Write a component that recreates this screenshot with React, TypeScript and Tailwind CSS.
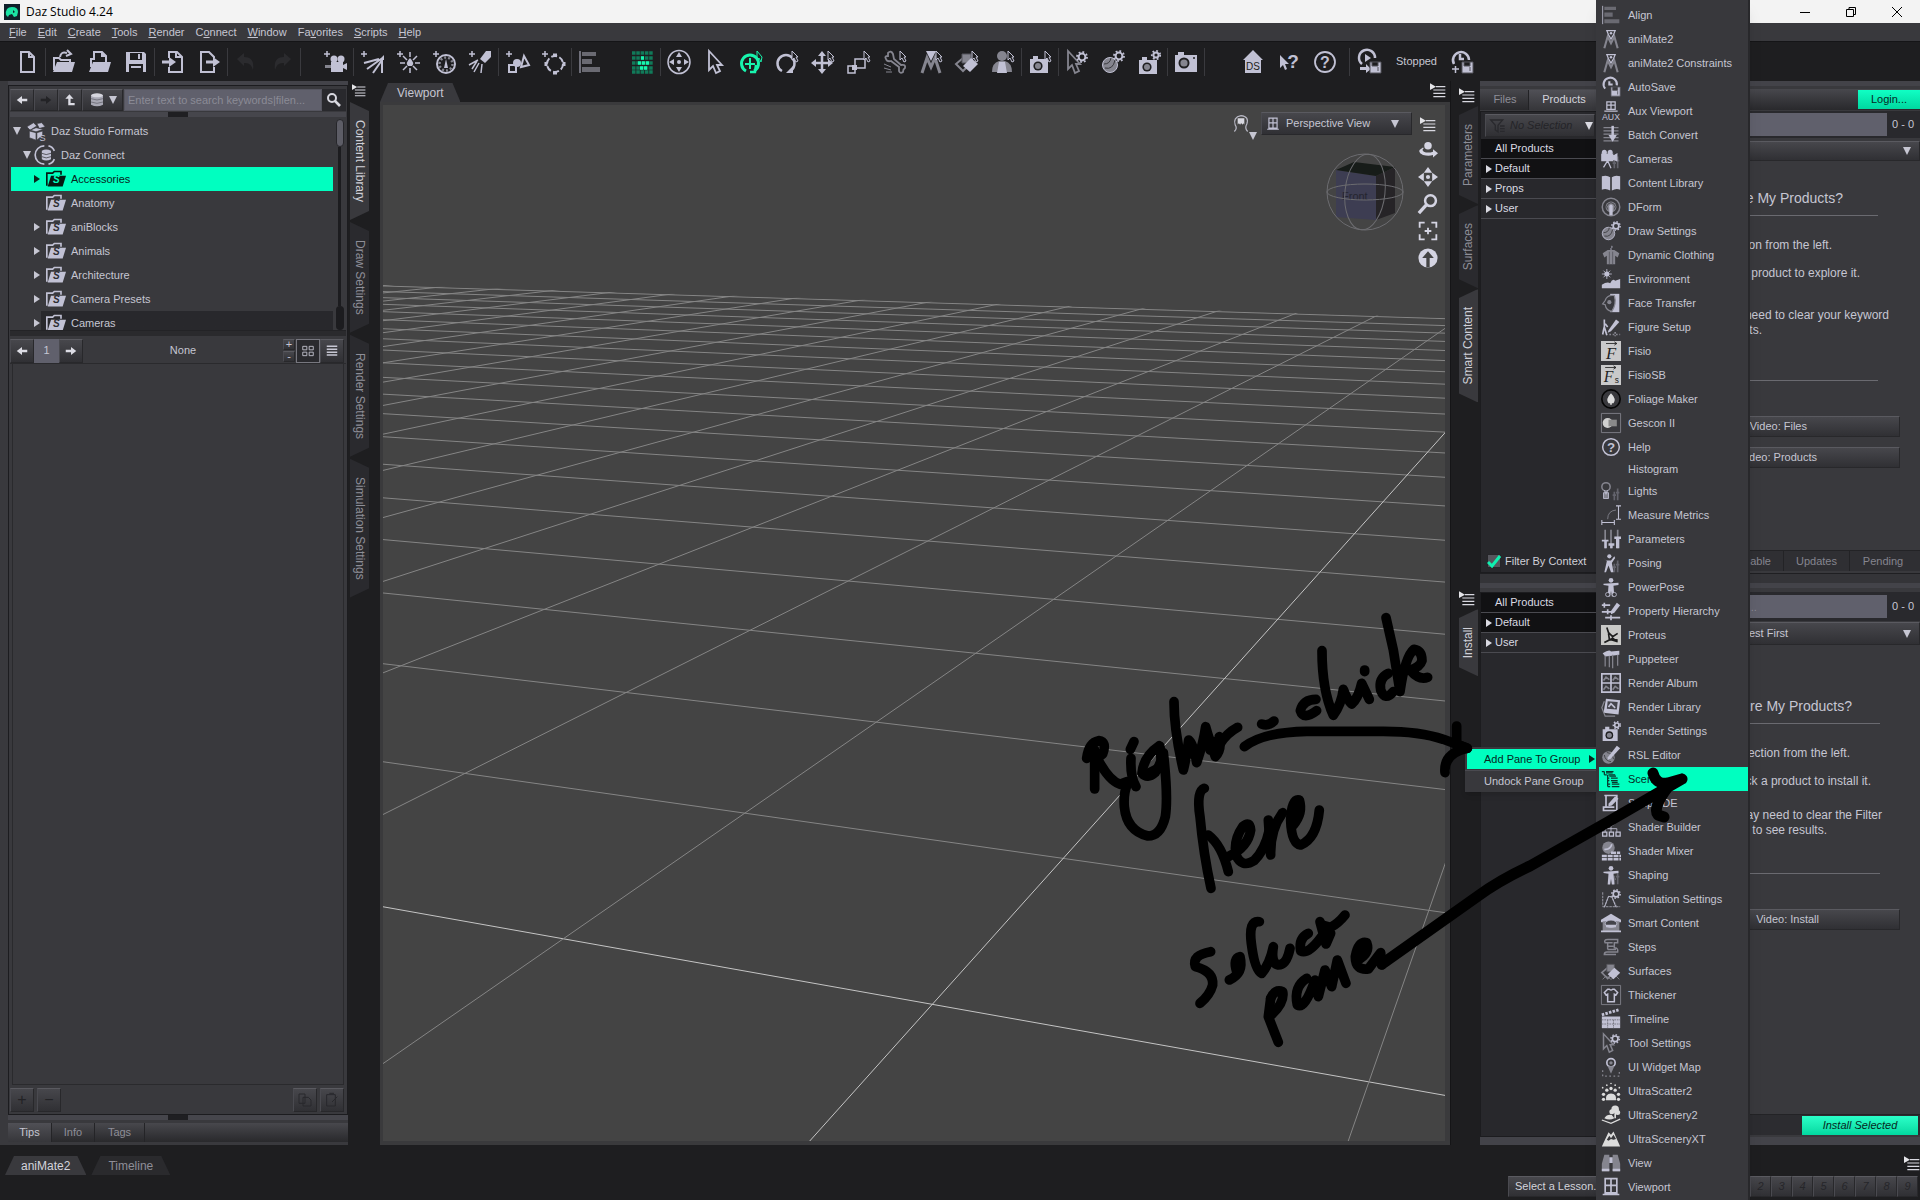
import React from "react";
import type { ReactNode } from "react";

const L = "#c1c1d4";
const D = "#85858f";

type IconProps = { name: string; className?: string };

const pointer = <path d="M17 1v9l2-2 2 4 2-1-2-4h2z" fill="#1e1e20" stroke={L} strokeWidth="1" />;
const plus = <path d="M1 4h6M4 1v6" stroke={L} strokeWidth="1.5" />;
const gear = (x: number, y: number, r = 3.4) => (
  <g fill="none" stroke={L}>
    <circle cx={x} cy={y} r={r} strokeWidth="2" />
    <circle cx={x} cy={y} r={r + 1.6} strokeWidth="1.8" strokeDasharray="1.8 2.1" />
  </g>
);
const sliders = (
  <path d="M16 13v10M20 9v14M14 17h4M18 14h4" stroke="#63636c" strokeWidth="2" />
);
const camera = (y = 0) => (
  <g transform={`translate(0 ${y})`}>
    <path d="M2 8h3V5h5v3h10v14H2z" fill={L} />
    <circle cx="10" cy="15" r="4.6" fill="#1e1e20" />
    <circle cx="10" cy="15" r="3" fill={D} />
  </g>
);
const person = (
  <>
    <circle cx="12" cy="4" r="2.8" fill={L} />
    <path d="M3 8l18-1v2.500l-6 1 1 13h-3l-1-7-1 7H8l1-13-6-1z" fill={L} />
  </>
);
const ballSettings = (
  <>
    <circle cx="9" cy="15" r="7.500" fill={D} stroke={L} />
    <path d="M4 18q8 2 10-8M3 14q6 0 7-6" stroke="#38383c" fill="none" />
    {gear(18, 6)}
  </>
);
const diamonds = (
  <>
    <path d="M8 8l-7 6 7 7 4-4" fill="none" stroke={D} strokeWidth="2" />
    <path d="M7 4h9v9H7z" fill={D} stroke="#55555c" />
    <path d="M16 8l7 6-8 8-7-6z" fill={L} />
  </>
);
const letterM = (
  <>
    <path d="M3 23L8 8l4 9 4-9 5 15M6 23" fill="none" stroke={D} strokeWidth="3" />
    <path d="M7 1h10l-5 10z" fill={L} />
  </>
);
const disk = <path d="M12 12h11v11H12zM14 12v4h6v-4M20 17v4" fill={L} stroke="#55555c" />;
const windowGlyph = (
  <path d="M5 2h14v17H5zM12 2v17M5 10h14M2 21h20" fill="none" stroke={L} strokeWidth="2" />
);

const icons: Record<string, ReactNode> = {
  new: <path d="M6 2h8l5 5v15H6zM14 2v5h5" fill="none" stroke={L} strokeWidth="2" />,
  open: (
    <>
      <path d="M2 20V8h5l2 2h9v3" fill="none" stroke={L} strokeWidth="2" />
      <path d="M5 12h18l-3 10H1z" fill={L} />
      <path d="M8 7q1-6 7-4M15 0l4 4-5 2" fill="none" stroke={L} strokeWidth="2" />
    </>
  ),
  recent: (
    <>
      <path d="M5 12h18l-3 10H1z" fill={L} />
      <path d="M3 17V9h3V2h8l4 4v6M14 2v4h4" fill="none" stroke={L} strokeWidth="2" />
    </>
  ),
  save: (
    <>
      <path d="M2 2h18l2 2v18H2z" fill={L} />
      <path d="M6 3h12v7H6zM5 14h14v8H5z" fill="#1e1e20" />
      <path d="M14 4h2v5h-2zM7 16h10v2H7z" fill={L} />
    </>
  ),
  import: (
    <>
      <path d="M8 8V2h8l5 5v15H8v-5M15 2v5h5" fill="none" stroke={L} strokeWidth="2" />
      <path d="M1 12h8" stroke={L} strokeWidth="3" />
      <path d="M8 7l7 5-7 5z" fill={L} />
    </>
  ),
  export: (
    <>
      <path d="M17 8V7l-5-5H4v20h13v-5" fill="none" stroke={L} strokeWidth="2" />
      <path d="M9 12h8" stroke={L} strokeWidth="3" />
      <path d="M16 7l7 5-7 5z" fill={L} />
    </>
  ),
  undo: <path d="M3 9l7-6v4q11 0 9 13-2-8-9-7v3z" fill="#2b2b2e" />,
  redo: <path d="M21 9l-7-6v4Q3 7 5 20q2-8 9-7v3z" fill="#2b2b2e" />,
  addCamera: (
    <>
      {plus}
      <circle cx="11" cy="9" r="3.500" fill={L} />
      <circle cx="18" cy="9" r="3.500" fill={L} />
      <path d="M8 12h12v10H8zM20 15l4-2v7l-4-2z" fill={L} />
      <path d="M2 15h6v3H2z" fill={D} />
    </>
  ),
  distant: (
    <>
      {plus}
      <path d="M24 5v5h-5z" fill={L} />
      <path d="M4 13l15-4M7 19L21 9M13 23l9-13M22 23V10" stroke={L} strokeWidth="2" fill="none" />
    </>
  ),
  point: (
    <>
      {plus}
      <path d="M14 2v5M14 18v5M4 13h5M19 13h5M7 6l4 4M21 6l-4 4M7 20l4-4M21 20l-4-4" stroke={L} strokeWidth="1.500" />
      <path d="M14 8q5 5 2 8h-4q-3-3 2-8z" fill={L} />
    </>
  ),
  clock: (
    <>
      {plus}
      <circle cx="14" cy="14" r="9" fill="none" stroke={L} strokeWidth="2" />
      <circle cx="14" cy="14" r="6.500" fill="none" stroke={D} strokeWidth="2.500" strokeDasharray="2 2" />
      <path d="M14 9l2 9h-4z" fill={L} />
    </>
  ),
  spot: (
    <>
      {plus}
      <path d="M18 1h5v6l-6 6-5-4z" fill={L} />
      <path d="M10 10L1 15M11 13l-5 9M14 14l-1 9M9 11l-5 8" stroke={L} strokeWidth="1.500" />
    </>
  ),
  primitive: (
    <>
      {plus}
      <path d="M19 6l5 9-8 2zM4 15h7v7H4z" fill="#1e1e20" stroke={L} strokeWidth="2" />
      <circle cx="12" cy="13" r="4" fill={L} />
    </>
  ),
  group: (
    <>
      {plus}
      <circle cx="14" cy="14" r="8" fill="none" stroke={L} strokeWidth="2" strokeDasharray="6 2.400" />
      <path d="M12 5h4M12 23h4M5 12v4M23 12v4" stroke={L} strokeWidth="3" />
    </>
  ),
  align: (
    <>
      <path d="M2 1v22" stroke={L} strokeWidth="1" />
      <path d="M4 2h14v4H4zM4 9h10v5H4zM4 17h18v5H4z" fill="#6a6a72" />
    </>
  ),
  iray: (
    <>
      <path d="M2 3h21M2 8h21M2 13h21M2 18h21M2 22h21" stroke="#117a59" strokeWidth="3.500" strokeDasharray="3.500 .8" />
      <path d="M11 8h3M8 13h12M10 18h8" stroke="#18f5ae" strokeWidth="3.500" strokeDasharray="3 1" />
    </>
  ),
  universal: (
    <>
      <ellipse cx="12" cy="12" rx="11" ry="11.500" fill="none" stroke={L} strokeWidth="1.500" />
      <path d="M12 2l3 5H9zM12 22l3-5H9zM2 12l5-3v6zM22 12l-5-3v6z" fill={L} />
      <circle cx="12" cy="12" r="2" fill={L} />
    </>
  ),
  arrow: <path d="M6 1v19l4-4 3 7 4-2-3-6h5z" fill="none" stroke={L} strokeWidth="1.800" />,
  rotateGreen: (
    <g stroke="#18f5ae" fill="none">
      <path d="M7 21a8.500 8.500 0 1 1 8 0" strokeWidth="3" />
      <path d="M11 8v11M6 14h10" strokeWidth="2" />
      <path d="M17 15l-1 7h-5" strokeWidth="2.500" />
      <path d="M18 1v9l2-2 2 4 1-5z" />
    </g>
  ),
  rotate: (
    <>
      <path d="M7 21a8.500 8.500 0 1 1 8 0" stroke={L} strokeWidth="2.500" fill="none" />
      <path d="M18 16v7h-7z" fill={L} />
      {pointer}
    </>
  ),
  translate: (
    <>
      <path d="M11 5v16M3 13h16" stroke={L} strokeWidth="2.500" />
      <path d="M11 1l4 5H7zM11 24l4-5H7zM0 13l5-4v8zM22 13l-5-4v8z" fill={L} />
      {pointer}
    </>
  ),
  scale: (
    <>
      <path d="M8 9h10v9H8zM1 16h7v7H1z" stroke={L} strokeWidth="1.500" fill="none" />
      <path d="M5 15h5v5H5z" fill={L} />
      {pointer}
    </>
  ),
  bone: (
    <>
      <path d="M5 3q3-3 5 1l1 5 7 6q5-1 4 3-2 1-2 4-3 2-4-1v-4l-8-6q-4 1-5-2-2-3 2-3z" fill="none" stroke={D} strokeWidth="1.800" />
      <path d="M1 14l7 3M1 18l7 2M3 22l6 0" stroke={D} />
      {pointer}
    </>
  ),
  mate: (
    <>
      {letterM}
      {pointer}
    </>
  ),
  surfacesTool: (
    <>
      {diamonds}
      {pointer}
    </>
  ),
  figure: (
    <>
      <circle cx="11" cy="6" r="5" fill={D} />
      <path d="M1 22q0-9 7-11h6q7 2 7 11z" fill={D} />
      <path d="M6 23l2-11h6l2 11z" fill={L} />
      {pointer}
    </>
  ),
  camTool: (
    <>
      {camera(1)}
      {pointer}
    </>
  ),
  arrowSettings: (
    <>
      <path d="M3 1v18l4-4 3 8 4-2-3-7h4z" fill="none" stroke={D} strokeWidth="1.800" />
      {gear(17, 7)}
    </>
  ),
  ballSettings,
  camSettings: (
    <>
      {camera(2)}
      {gear(19, 5, 2.600)}
    </>
  ),
  cam: (
    <>
      <path d="M1 5h3V2h6v3h13v17H1z" fill={L} />
      <circle cx="10" cy="13" r="5.500" fill="#1e1e20" />
      <circle cx="10" cy="13" r="3.600" fill={D} />
      <circle cx="20" cy="8" r="1" fill="#1e1e20" />
    </>
  ),
  house: (
    <>
      <path d="M12 0l10 10h-2v13H4V10H2z" fill={L} />
      <text x="12" y="20" textAnchor="middle" fontSize="10" fill="#1e1e20">DS</text>
    </>
  ),
  whats: (
    <>
      <path d="M3 5v13l3-3 2 5 2-1-2-5h4z" fill={L} />
      <text x="16" y="18" textAnchor="middle" fontSize="19" fontWeight="bold" fill={L}>?</text>
    </>
  ),
  help: (
    <>
      <circle cx="12" cy="12" r="10" fill="none" stroke={L} strokeWidth="1.800" />
      <text x="12" y="17.500" textAnchor="middle" fontSize="16" fontWeight="bold" fill={L}>?</text>
    </>
  ),
  autosaveRun: (
    <>
      <path d="M4 14a8 8 0 1 1 13-6" fill="none" stroke={L} strokeWidth="2.500" />
      <path d="M7 4l6 4-6 4zM2 17h6v-3l5 5-5 4v-3H2z" fill={L} />
      {disk}
    </>
  ),
  autosaveAdd: (
    <>
      <path d="M4 14a8 8 0 1 1 15-4M10 4v5h4" fill="none" stroke={L} strokeWidth="2.500" />
      <path d="M2 19h7M5.500 16v7" stroke={L} strokeWidth="1.500" />
      {disk}
    </>
  ),
  autosave: (
    <>
      <path d="M5 14a8 8 0 1 1 14-4M10 5v4h4" fill="none" stroke={L} strokeWidth="2.500" />
      {disk}
    </>
  ),
  animate: (
    <>
      <path d="M4 23L8 9l4 8 4-8 4 14" fill="none" stroke={D} strokeWidth="2.500" />
      <path d="M7 2h10l-2 5-3 5-3-5z" fill="none" stroke={L} strokeWidth="1.500" />
      <circle cx="12" cy="5" r="1.500" fill={L} />
    </>
  ),
  aux: (
    <>
      <path d="M7 1h10v9H7zM12 1v9M7 5h10M4 12h16" fill="none" stroke={L} strokeWidth="1.500" />
      <text x="12" y="23" textAnchor="middle" fontSize="10.500" fill={L}>AUX</text>
    </>
  ),
  batch: (
    <>
      <path d="M3 3h18M3 7h18M3 11h18M3 15h18M3 19h18" stroke={D} strokeWidth="1.500" />
      <path d="M14 1v14" stroke={L} strokeWidth="3" />
      <path d="M9 12h10l-5 8z" fill={L} />
    </>
  ),
  cameras: (
    <>
      {sliders}
      <circle cx="4" cy="4" r="3" fill={L} />
      <circle cx="11" cy="4" r="3" fill={L} />
      <path d="M1 6h13v8H1zM14 9l5-3v8l-5-2zM8 14l-5 8M8 14l4 9" fill={L} stroke={L} strokeWidth="1.500" />
    </>
  ),
  book: <path d="M1 4q6-2 10 1v16q-5-3-10-1zM23 4q-6-2-10 1v16q5-3 10-1z" fill={L} />,
  dform: (
    <>
      <circle cx="12" cy="12" r="10.500" fill="none" stroke={D} strokeWidth="1.800" />
      <circle cx="12" cy="12" r="6.500" fill={D} />
      <path d="M10 11a2 2 0 1 1 4 0v11h-4z" fill={L} />
      <path d="M8 15a5 5 0 1 1 8 0" stroke="#38383c" fill="none" />
    </>
  ),
  clothing: (
    <>
      <path d="M12 6V4q2-1 1-3" stroke={L} fill="none" />
      <path d="M8 6h8l6 4-2 5-3-2v10H7V13l-3 2-2-5z" fill={D} />
      <path d="M10 8v15M14 8v15" stroke="#55555e" />
    </>
  ),
  environment: (
    <>
      <circle cx="7" cy="6" r="3" fill={L} />
      <path d="M7 0v12M1 6h12M3 2l8 8M11 2l-8 8" stroke={L} />
      <path d="M1 23v-4q6-4 10-2 3-6 6-3l6-2v11z" fill={L} />
    </>
  ),
  face: (
    <>
      <path d="M11 1h11v22H11" fill={L} />
      <path d="M16 3Q7 2 5 9l-3 4 3 1q1 7 8 8 6-9 3-19z" fill="#38383c" stroke={D} strokeWidth="1.500" />
      <circle cx="10" cy="11" r="2.500" fill={D} />
    </>
  ),
  figureSetup: (
    <>
      <path d="M4 3v8l-2 10M5 8l3 4M4 12l3 10" stroke={L} strokeWidth="2" />
      <path d="M9 16l9-13 4 3-10 11-4 2z" fill={L} />
      <path d="M10 21h13M17 18v5" stroke={D} strokeWidth="2" strokeDasharray="2 2" />
    </>
  ),
  fisio: (
    <>
      <path d="M0 0h24v24H0z" fill="#c9c9ca" />
      <path d="M6 3h13m-3-2 3 2-3 2" stroke="#222" fill="none" />
      <text x="12" y="21" textAnchor="middle" fontSize="20" fontStyle="italic" fontFamily="Liberation Serif, serif" fill="#222">F</text>
    </>
  ),
  fisiosb: (
    <>
      <path d="M0 0h24v24H0z" fill="#c9c9ca" />
      <path d="M5 3h13m-3-2 3 2-3 2" stroke="#222" fill="none" />
      <text x="9" y="20" textAnchor="middle" fontSize="19" fontStyle="italic" fontFamily="Liberation Serif, serif" fill="#222">F</text>
      <text x="19" y="21" textAnchor="middle" fontSize="10" fill="#222">s</text>
    </>
  ),
  foliage: (
    <>
      <circle cx="12" cy="12" r="11" fill="#39393d" stroke="#050505" strokeWidth="2" />
      <path d="M12 5q7 7 3 12h-2v2h-2v-2H9q-4-5 3-12z" fill="#dcdcdc" />
    </>
  ),
  gescon: (
    <>
      <path d="M.5.5h23v23H.5z" fill="none" stroke={D} />
      <circle cx="8" cy="12" r="6" fill="#d0d0d0" />
      <path d="M9 8h10v8H9z" fill="#8a8a8a" />
    </>
  ),
  lights: (
    <>
      {sliders}
      <circle cx="6" cy="7" r="5" fill="none" stroke={D} strokeWidth="1.800" />
      <path d="M4 11l2 5 2-5M3 14h6v7H3z" fill={D} stroke={L} />
    </>
  ),
  measure: (
    <>
      <path d="M1 21h15M1 18v6M16 18v6M21 1v16M18 1h6M18 17h6" stroke={L} strokeWidth="1.300" />
      <path d="M8 17q0-10 10-11" stroke={D} fill="none" />
    </>
  ),
  parameters: (
    <>
      <path d="M5 1v22M12 1v22M20 1v22" stroke={D} strokeWidth="2" />
      <path d="M1 13h8v2H1zM4 13h3v10H4zM9 17h7v3H9zM11 17h3v6h-3zM16 9h8v3h-8zM18 9h4v14h-4z" fill={L} />
    </>
  ),
  posing: (
    <>
      {sliders}
      <circle cx="10" cy="4" r="2.500" fill={L} />
      <path d="M1 4l5 5h6l4-5 1 2-4 6 2 11h-3l-3-8-3 8H4l3-13-6-6z" fill={L} />
    </>
  ),
  powerpose: (
    <>
      {person}
      <circle cx="8" cy="21" r="2.500" fill="#38383c" stroke={L} />
      <circle cx="16" cy="21" r="2.500" fill="#38383c" stroke={L} />
    </>
  ),
  hierarchy: (
    <>
      <path d="M1 5h10M1 13h14M5 20h18M4 2v6M8 10v6M12 17v6" stroke={L} strokeWidth="2" />
      <path d="M12 12l7-10 4 3-7 9-4 2z" fill={L} />
    </>
  ),
  proteus: (
    <>
      <path d="M0 0h24v24H0z" fill="#c8c8c6" />
      <path d="M7 3l2 6 5 5 6-4M9 10l1 7 10 3M4 21l8-4 8 1M13 15l6 5" stroke="#1c1c1c" strokeWidth="2" fill="none" />
    </>
  ),
  puppeteer: (
    <>
      <path d="M2 5q8-5 10-2l10-1v5l-9 1-8 1z" fill={L} />
      <path d="M5 8v13M10 8v14M14 7v16M20 7v13" stroke={D} strokeWidth="1.500" />
    </>
  ),
  album: (
    <>
      <path d="M1 1h22v22H1zM12 1v22M1 12h22" fill="none" stroke={L} strokeWidth="2" />
      <path d="M3 9l3-4 4 3M14 9l3-4 4 3M3 20l3-4 4 3M14 20l3-4 4 3" stroke={D} strokeWidth="2" fill="none" />
    </>
  ),
  library: (
    <>
      <path d="M6 2l17 2-2 17-18-2z" fill={L} />
      <path d="M8 5l12 1-1 9-12-1z" fill="#44444b" />
      <path d="M9 12l3-4 5 5" stroke={L} strokeWidth="2" fill="none" />
      <path d="M4 5l-3 8 4 10 12 0" stroke={D} fill="none" strokeWidth="1.500" />
    </>
  ),
  rsl: (
    <>
      <circle cx="9" cy="15" r="7.500" fill={D} />
      <path d="M4 12q1 7 8 8M7 9q7 1 8 8" stroke="#38383c" fill="none" />
      <path d="M8 15L19 1l4 3-11 12-4 2z" fill={L} />
    </>
  ),
  scene: (
    <g stroke="#08362a" strokeWidth="1.500" fill="none">
      <path d="M1 3h3M6 3h9M4 3v4M4 7h3M9 7h8M8 7v14M8 11h2M12 11h8M8 14h2M12 14h8M8 18h3M13 18h9M8 21h3M13 21h9" />
      <path d="M6 4.500h8M10 8.500h8M13 16h7" />
    </g>
  ),
  script: (
    <>
      <path d="M4 3h15v18H3v-4h13M6 3v14" fill="none" stroke={L} strokeWidth="2" />
      <path d="M9 13l8-9 4 3-8 8-4 1z" fill={L} />
    </>
  ),
  builder: (
    <>
      <circle cx="12" cy="6" r="5" fill={D} />
      <path d="M5 18v-4h14v4M12 11v7" stroke={L} fill="none" />
      <path d="M2 18h5v5H2zM10 18h5v5h-5zM18 18h5v5h-5z" fill="none" stroke={L} strokeWidth="1.500" />
    </>
  ),
  mixer: (
    <>
      <circle cx="9" cy="8" r="7.500" fill={D} />
      <path d="M4 10q7 1 9-6" stroke={L} fill="none" strokeWidth="2" />
      <path d="M1 18h23M1 22h23M12 14h11" stroke={L} strokeWidth="3" strokeDasharray="6 1" />
    </>
  ),
  shaping: (
    <>
      {sliders}
      {person}
    </>
  ),
  simulation: (
    <>
      <path d="M2 4v17M4 22L9 9l4 1 6 12M2 21h21" fill="none" stroke={D} strokeWidth="1.500" strokeDasharray="3 1" />
      <path d="M4 22L9 9h4l5 13" fill="none" stroke={L} />
      {gear(18, 6)}
    </>
  ),
  smart: (
    <>
      <path d="M12 1l12 7v3H0V8z" fill={L} />
      <path d="M2 10h20v12H2z" fill={D} />
      <ellipse cx="12" cy="13" rx="7" ry="4.500" fill="#44444b" stroke={L} />
      <path d="M6 14h12v3H6zM0 21h24v2H0z" fill={L} />
    </>
  ),
  steps: <path d="M8 3h12v4h-4v6q5 0 4 5H7q-3 0-3 3h14M8 3q-5 0-3 4h9M8 7v8M7 11h8M8 15h10" fill="none" stroke={D} strokeWidth="1.800" />,
  diamonds: (
    <>
      <path d="M2 22l4-4 6 4 6-4 4 4" fill="none" stroke={D} />
      {diamonds}
    </>
  ),
  thickener: (
    <>
      <path d="M.5.500h23v23H.5z" fill="none" stroke={D} />
      <path d="M8 5h2q2 2 4 0h2l4 4-2 3-2-1v9H8v-9l-2 1-2-3z" fill="none" stroke={L} strokeWidth="1.800" />
    </>
  ),
  timeline: (
    <>
      <path d="M1 9h22v14H1z" fill={L} />
      <path d="M1 7L21 1" stroke={L} strokeWidth="3.500" strokeDasharray="3 1.500" />
      <path d="M1 13h22M1 18h22M8 13v10M15 13v10" stroke="#6c6c76" strokeDasharray="2 1" />
    </>
  ),
  widget: (
    <>
      <circle cx="12" cy="7" r="5" fill="none" stroke={L} strokeWidth="2" />
      <path d="M8 11h8l-4 9z" fill={D} />
      <path d="M2 16v7h20v-7" fill="none" stroke={D} strokeWidth="1.500" strokeDasharray="2 3" />
      <circle cx="12" cy="7" r="2" fill={D} />
    </>
  ),
  scatter: (
    <g fill="#dcdcdc">
      <path d="M6 23q-1-8 6-8t6 8z" />
      <circle cx="3" cy="22" r="2" />
      <circle cx="21" cy="22" r="2" />
      <circle cx="3" cy="16" r="2" />
      <circle cx="21" cy="16" r="2" />
      <circle cx="7" cy="11" r="2" />
      <circle cx="17" cy="11" r="2" />
      <circle cx="12" cy="9" r="2" />
      <circle cx="2" cy="8" r="1" />
      <circle cx="22" cy="8" r="1" />
      <circle cx="7" cy="5" r="1" />
      <circle cx="17" cy="5" r="1" />
      <circle cx="12" cy="3" r="1" />
    </g>
  ),
  scenery: (
    <g fill="#dcdcdc">
      <circle cx="17" cy="5" r="4.500" />
      <circle cx="13" cy="8" r="3" />
      <circle cx="20" cy="9" r="3" />
      <path d="M16 8h2v8h-2zM4 16q3-5 9-4l3 4q-6 3-12 0z" />
      <path d="M1 18l11 4 11-5" fill="none" stroke="#dcdcdc" strokeWidth="1.500" />
    </g>
  ),
  mountain: (
    <>
      <path d="M1 21L9 4l3 3 3-4 8 18z" fill="#dcdcdc" />
      <path d="M7 13l3-5 2 3 3-4 3 5-3 1-3-1-3 2z" fill="#38383c" />
    </>
  ),
  view: (
    <>
      <path d="M4 2h6v20H1V13zM14 2h6l3 11v9h-9z" fill={D} />
      <path d="M10 5h4v7h-4zM1 19h9v3H1zM14 19h9v3h-9z" fill={L} />
    </>
  ),
  window: windowGlyph,
  paneMenu: (
    <>
      <path d="M0 2l9 5-9 5z" fill="#e4e4e8" />
      <path d="M9 7h14M5 12h18M5 17h18M5 22h18" stroke="#d8d8e0" strokeWidth="1.800" />
    </>
  ),
  left: <path d="M12 5v5h9v4h-9v5l-9-7z" fill="#dcdce4" />,
  right: <path d="M12 5v5H3v4h9v5l9-7z" fill="#dcdce4" />,
  rightDim: <path d="M12 5v5H3v4h9v5l9-7z" fill="#232326" />,
  up: <path d="M11 2L4 10h5v11h11v-4h-7v-7h5z" fill="#dcdce4" />,
  db: (
    <>
      <path d="M3 5v14q9 5 18 0V5z" fill="#a8a8b4" />
      <ellipse cx="12" cy="5" rx="9" ry="3" fill="#d6d6de" />
      <path d="M3 10q9 4 18 0M3 15q9 4 18 0" stroke="#5b5b64" fill="none" />
    </>
  ),
  search: (
    <>
      <circle cx="9" cy="9" r="6" fill="none" stroke="#d8d8e0" strokeWidth="3" />
      <path d="M13 13l8 8" stroke="#d8d8e0" strokeWidth="4" />
    </>
  ),
  boxes: (
    <>
      <path d="M1 7l8-5 4 4-8 5zM13 3l6-1 4 5-7 2zM4 12l8 2v9l-8-3zM13 14l7-2v5l-7 6zM12 8l9 2-9 3-7-2z" fill={L} stroke="#38383c" strokeWidth=".8" />
      <text x="20" y="24" textAnchor="middle" fontSize="11" fill={L}>S</text>
    </>
  ),
  connect: (
    <>
      <path d="M10 1a11 11 0 0 0 0 22M15 1q5 1 7 6M15 23q5-1 7-6" fill="none" stroke={L} strokeWidth="2" />
      <path d="M7 7v10q5 3 11 0V7q-6-3-11 0z" fill={L} />
      <path d="M7 10q5 3 11 0M7 14q5 3 11 0" fill="none" stroke="#44444b" />
    </>
  ),
  folder: (
    <>
      <path d="M1 20V5h7l2-2h8v4" fill="none" stroke="currentColor" strokeWidth="2" />
      <path d="M6 8h18l-4 13H2z" fill="currentColor" />
    </>
  ),
  orbit: (
    <g fill="#d4d4e2">
      <circle cx="12" cy="7" r="4.500" />
      <path d="M6 9q-9 5 0 9 7 2 12 0v3l6-5-6-5v3q-6 2-11 0-3-2 0-4z" />
    </g>
  ),
  pan: (
    <g fill="#d4d4e2">
      <path d="M12 0l5 7H7zM12 24l5-7H7zM0 12l7-5v10zM24 12l-7-5v10z" />
      <circle cx="12" cy="12" r="2.500" />
    </g>
  ),
  zoom: (
    <>
      <circle cx="15" cy="8" r="6.500" fill="none" stroke="#d4d4e2" strokeWidth="3" />
      <path d="M10 13L1 23" stroke="#d4d4e2" strokeWidth="4" />
    </>
  ),
  frame: (
    <path d="M2 8V2h6M16 2h6v6M22 16v6h-6M8 22H2v-6M12 8v8M8 12h8" fill="none" stroke="#d4d4e2" strokeWidth="2.200" />
  ),
  home: (
    <>
      <circle cx="12" cy="12" r="11.500" fill="#d4d4e2" />
      <path d="M12 4l7 8h-5v11h-4V12H5z" fill="#444" />
    </>
  ),
  head: (
    <>
      <path d="M4 21q4-4 1-8Q2 4 12 2q10 1 7 10-3 5 1 9" fill="none" stroke="#b8b8c4" strokeWidth="1.500" />
      <path d="M8 5h8v8q-1-3-2 0-2-4-3 0-2-3-3 0z" fill="#d8d8e0" />
    </>
  ),
  list: <path d="M3 4h18M3 9h18M3 14h18M3 19h18" stroke="#c8c8d4" strokeWidth="2.500" />,
  grid: <path d="M3 4h7v6H3zM14 4h7v6h-7zM3 14h7v6H3zM14 14h7v6h-7z" stroke="#c8c8d4" strokeWidth="1.500" fill="none" />,
  copy: <path d="M3 3h9v14H3zM9 8h8l4 4v9H9z" stroke="#28282c" strokeWidth="1.500" fill="none" />,
  paste: <path d="M4 4h13v17H4zM8 2h7M12 15l8-8" stroke="#28282c" strokeWidth="1.500" fill="none" />,
  funnel: (
    <path d="M1 3h18l-7 8v10l-4-3v-7zM15 12h7M15 16h7M15 20h7" stroke="#29292d" strokeWidth="2" fill="none" />
  ),
};

function Icon({ name, className = "size-7" }: IconProps) {
  return (
    <svg viewBox="0 0 24 24" aria-hidden="true" className={`${className} shrink-0 overflow-visible`}>
      {icons[name]}
    </svg>
  );
}

const raised = "border border-t-[#5a5a60] border-l-[#4a4a50] border-r-[#28282b] border-b-[#28282b] bg-gradient-to-b from-[#47474c] to-[#303034]";

function ToolButton({ name }: { name: string }) {
  return (
    <button aria-label={name} className="flex h-10 w-9 items-center justify-center">
      <Icon name={name} className="size-6" />
    </button>
  );
}

function Sep() {
  return <span className="h-7 w-px bg-[#3a3a3e]" />;
}

const menus: [string, number][] = [
  ["File", 0], ["Edit", 0], ["Create", 0], ["Tools", 0], ["Render", 0],
  ["Connect", 1], ["Window", 0], ["Favorites", 2], ["Scripts", 0], ["Help", 0],
];

const tools: string[][] = [
  ["new"], ["open", "recent", "save"], ["import", "export"], ["undo", "redo"],
];
const createTools: string[][] = [
  ["addCamera"], ["distant", "point", "clock", "spot"], ["primitive", "group"], ["align"],
];
const viewTools: string[][] = [
  ["iray"],
  ["universal", "arrow", "rotateGreen", "rotate", "translate", "scale", "bone", "mate", "surfacesTool", "figure"],
  ["camTool"], ["arrowSettings", "ballSettings", "camSettings"], ["cam"],
];

function ToolGroups({ groups, tail }: { groups: string[][]; tail: boolean }) {
  return (
    <div className="flex items-center">
      {groups.map((g, i) => (
        <React.Fragment key={i}>
          {g.map((n) => <ToolButton key={n} name={n} />)}
          {(tail || i < groups.length - 1) && <Sep />}
        </React.Fragment>
      ))}
    </div>
  );
}

function TitleBar() {
  return (
    <header className="flex h-[23px] shrink-0 items-center bg-[#f3f3f3] pl-1 text-black">
      <svg viewBox="0 0 16 16" className="mr-1.5 size-4" aria-hidden="true">
        <path d="M0 0h16v16H0z" fill="#10202a" />
        <path d="M2 11Q1 3 8 3q6 0 6 5l-1 4-3 1-2-3-3 1-1 2z" fill="#1be3a4" />
        <path d="M9 6l2 2-2 1z" fill="#10202a" />
      </svg>
      <h1 className="font-['Open_Sans','Noto_Sans',sans-serif] text-xs">Daz Studio 4.24</h1>
      <div className="ml-auto flex">
        <button aria-label="Minimize" className="flex w-[46px] justify-center">
          <svg viewBox="0 0 10 10" className="size-2.5"><path d="M0 5.500h10" stroke="#000" /></svg>
        </button>
        <button aria-label="Restore" className="flex w-[46px] justify-center">
          <svg viewBox="0 0 10 10" className="size-2.5"><path d="M.5 2.500h7v7h-7zM3 2.500V.500h6.500v7h-2" fill="none" stroke="#000" /></svg>
        </button>
        <button aria-label="Close" className="flex w-[46px] justify-center">
          <svg viewBox="0 0 10 10" className="size-2.5"><path d="M0 0l10 10M10 0L0 10" stroke="#000" /></svg>
        </button>
      </div>
    </header>
  );
}

function MenuBar() {
  return (
    <nav className="flex h-[18px] shrink-0 items-center gap-[11px] bg-[#39393d] pl-[9px]">
      {menus.map(([m, u]) => (
        <button key={m} className="leading-4">
          {m.slice(0, u)}<span className="underline">{m[u]}</span>{m.slice(u + 1)}
        </button>
      ))}
    </nav>
  );
}

function Toolbar() {
  return (
    <div className="flex h-10 shrink-0 items-center border-t border-[#151517] bg-[#1e1e20] pl-[9px]">
      <ToolGroups groups={tools} tail />
      <div className="ml-4"><ToolGroups groups={createTools} tail={false} /></div>
      <div className="ml-4"><ToolGroups groups={viewTools} tail /></div>
      <div className="ml-[30px] flex items-center">
        <ToolButton name="house" />
        <ToolButton name="whats" />
        <ToolButton name="help" />
        <span className="ml-1.5 mr-0.5 h-7 w-px bg-[#3a3a3e]" />
        <ToolButton name="autosaveRun" />
        <span className="w-14 pl-2">Stopped</span>
        <ToolButton name="autosaveAdd" />
      </div>
    </div>
  );
}

function Tri({ dir, className = "" }: { dir: "r" | "d"; className?: string }) {
  return (
    <svg viewBox="0 0 8 8" className={`size-2 shrink-0 ${className}`} aria-hidden="true">
      <path d={dir === "r" ? "M1 0l6 4-6 4z" : "M0 0h8l-4 8z"} fill="currentColor" />
    </svg>
  );
}

function SideTab({ label, side, active = false }: { label: string; side: "l" | "r"; active?: boolean }) {
  const tone = active ? "bg-[#39393d] text-[#d0d0d8]" : "bg-[#2a2a2e] text-[#8e8e98]";
  return (
    <button
      className={`flex w-[19px] shrink-0 justify-center pb-[18px] pt-[18px] [clip-path:polygon(0_0,100%_9px,100%_calc(100%-9px),0_100%)] ${side === "r" ? "rotate-180" : ""} ${tone}`}
    >
      <span className="whitespace-nowrap text-xs leading-[19px] [writing-mode:vertical-rl]">{label}</span>
    </button>
  );
}

const folders = ["Accessories", "Anatomy", "aniBlocks", "Animals", "Architecture", "Camera Presets", "Cameras"];

function ContentLibrary() {
  return (
    <aside className="flex w-[340px] shrink-0 flex-col bg-[#39393d]">
      <div className="h-1 bg-[#434349]" />
      <div className="flex flex-1 flex-col border border-[#1c1c1f] px-px pt-[2px]">
        <div className="flex h-6 items-center">
          <button aria-label="Back" className={`flex h-[22px] w-6 items-center justify-center ${raised}`}><Icon name="left" className="size-3.5" /></button>
          <button aria-label="Forward" className={`flex h-[22px] w-6 items-center justify-center ${raised}`}><Icon name="rightDim" className="size-3.5" /></button>
          <button aria-label="Up" className={`flex h-[22px] w-6 items-center justify-center ${raised}`}><Icon name="up" className="size-3.5" /></button>
          <button aria-label="Database" className={`flex h-[22px] w-[41px] items-center justify-center gap-1 ${raised}`}><Icon name="db" className="size-4" /><Tri dir="d" /></button>
          <input aria-label="Search" placeholder="Enter text to search keywords|filen..." className="ml-px h-[22px] min-w-0 flex-1 border border-[#55555f] bg-[#60606c] px-[3px] placeholder:text-[#8b8b96]" />
          <button aria-label="Find" className="flex h-[22px] w-6 items-center justify-center bg-[#29292d]"><Icon name="search" className="size-4" /></button>
        </div>
        <div className="flex h-[5px] shrink-0 justify-center bg-[#46464c]"><span className="w-5 bg-[#1f1f22]" /></div>
        <div className="flex h-[214px] shrink-0 overflow-hidden border-b border-[#232326] pl-px pt-0.5">
          <ul className="flex-1">
            <li className="flex h-6 items-center pl-0.5"><Tri dir="d" /><Icon name="boxes" className="mx-[5px] size-5" />Daz Studio Formats</li>
            <li className="flex h-6 items-center pl-3"><Tri dir="d" /><Icon name="connect" className="mx-[5px] size-5" />Daz Connect</li>
            {folders.map((f, i) => (
              <li
                key={f}
                className={`flex h-6 items-center pl-[22px] ${i === 0 ? "bg-[#00ffc0] text-[#08241c]" : ""} ${i === 6 ? "bg-gradient-to-r from-[#39393d] from-[30px] to-[#28282c] to-[30px]" : ""}`}
              >
                <Tri dir="r" className={i === 1 ? "invisible" : ""} />
                <span className={`relative mx-[5px] flex ${i === 0 ? "text-[#041a13]" : "text-[#c1c1d4]"}`}>
                  <Icon name="folder" className="size-5" />
                  <span className={`absolute left-[7px] top-[5px] text-[10px] font-bold italic leading-3 ${i === 0 ? "text-[#00ffc0]" : "text-[#2e2e32]"}`}>S</span>
                </span>
                {f}
              </li>
            ))}
          </ul>
          <div className="flex w-[13px] flex-col items-center">
            <span className="h-7 w-2 rounded-sm border border-[#26262a] bg-[#5d5d66]" />
            <span className="w-[3px] flex-1 bg-[#1c1c1f]" />
            <span className="h-6 w-2 rounded bg-[#1c1c1f]" />
          </div>
        </div>
        <div className="h-[5px] shrink-0 bg-[#2a2a2d]" />
        <div className="mt-0.5 flex h-[26px] shrink-0 items-center border-b border-[#2a2a2d]">
          <button aria-label="Previous page" className={`flex h-6 w-6 items-center justify-center ${raised}`}><Icon name="left" className="size-3.5" /></button>
          <button className="h-6 w-[25px] bg-[#60606c]">1</button>
          <button aria-label="Next page" className={`flex h-6 w-6 items-center justify-center ${raised}`}><Icon name="right" className="size-3.5" /></button>
          <span className="flex-1 text-center">None</span>
          <div className="mr-px flex w-3 flex-col gap-px">
            <button aria-label="Larger" className={`h-[11px] leading-[9px] ${raised}`}>+</button>
            <button aria-label="Smaller" className={`h-[11px] leading-[9px] ${raised}`}>-</button>
          </div>
          <button aria-label="Grid view" className="flex size-6 items-center justify-center border border-[#77777f] bg-[#2a2a2e]"><Icon name="grid" className="size-3.5" /></button>
          <button aria-label="List view" className={`mr-0.5 flex size-6 items-center justify-center ${raised}`}><Icon name="list" className="size-3.5" /></button>
        </div>
        <div className="mx-0.5 flex-1 border border-t-0 border-[#2a2a2d]" />
        <div className="flex h-[29px] shrink-0 items-center gap-[3px] pr-0.5">
          <button aria-label="Add" className={`size-6 text-base leading-5 text-[#222225] ${raised}`}>+</button>
          <button aria-label="Remove" className={`size-6 text-base leading-5 text-[#222225] ${raised}`}>−</button>
          <button aria-label="Copy" className={`ml-auto flex size-6 items-center justify-center ${raised}`}><Icon name="copy" className="size-4" /></button>
          <button aria-label="Paste" className={`flex size-6 items-center justify-center ${raised}`}><Icon name="paste" className="size-4" /></button>
        </div>
      </div>
      <div className="flex h-[5px] justify-center bg-[#46464c]"><span className="w-5 bg-[#1f1f22]" /></div>
      <div className="mb-[3px] mt-[3px] flex h-[19px] bg-gradient-to-b from-[#48484d] to-[#29292c]">
        <button className="w-[43px] bg-gradient-to-b from-[#505056] to-[#36363a]">Tips</button>
        <button className="w-11 border-x border-[#242427] text-[#8e8e98]">Info</button>
        <button className="w-[50px] border-r border-[#242427] text-[#8e8e98]">Tags</button>
      </div>
    </aside>
  );
}

const rowLines = Array.from({ length: 21 }, (_, k) => ({
  k,
  y1: 156.4 + 3132 / (k + 4.174),
  y2: 158.4 + 3867 / (k + 4.127),
}));
const columnLines = Array.from({ length: 19 }, (_, i) => {
  const cot = 0.897 + 0.5475 * (i - 1);
  return { i, x: 1692 - cot * 1200, y: 157.4 + 1200 };
});

function FloorGrid() {
  return (
    <svg viewBox="383 105 1062 1036" preserveAspectRatio="none" className="h-full w-full" aria-hidden="true">
      <defs>
        <clipPath id="floor"><path d="M383 285L1445 317.700V1141H383z" /></clipPath>
      </defs>
      <g clipPath="url(#floor)" stroke="#858585" strokeWidth="1">
        {rowLines.map((l) => (
          <line key={l.k} x1="383" x2="1445" y1={l.y1} y2={l.y2} stroke={l.k === 0 ? "#c4c4c4" : undefined} />
        ))}
        {columnLines.map((l) => (
          <line key={l.i} x1="1692" y1="157.400" x2={l.x} y2={l.y} stroke={l.i === 1 ? "#c4c4c4" : undefined} />
        ))}
      </g>
      <g>
        <path d="M1336 170l40 6v44l-40-3z" fill="#3d3d52" />
        <path d="M1376 176l19-9v46l-19 7z" fill="#262427" />
        <path d="M1336 170l18-8 41 5-19 9z" fill="#171c19" />
        <text x="1342" y="200" fontSize="11" fill="#25252f">Front</text>
        <g fill="none" stroke="#6c6c70">
          <ellipse cx="1365" cy="192" rx="38" ry="38" />
          <ellipse cx="1365" cy="192" rx="20" ry="38" transform="rotate(6 1365 192)" />
          <ellipse cx="1365" cy="192" rx="38" ry="8" />
        </g>
      </g>
    </svg>
  );
}

function Viewport() {
  return (
    <main className="flex min-w-0 flex-1 flex-col bg-[#1e1e20]">
      <div className="flex h-[21px] items-end justify-between pr-1">
        <button className="h-[19px] bg-[#39393d] px-[17px] text-xs leading-[16px] [clip-path:polygon(8px_0,calc(100%-8px)_0,100%_100%,0_100%)]">Viewport</button>
        <Icon name="paneMenu" className="mb-1 size-4" />
      </div>
      <div className="relative flex-1 border-[3px] border-b-4 border-r-[5px] border-[#3a3a3c] bg-[#444444]">
        <div className="absolute inset-0"><FloorGrid /></div>
        <div className="absolute right-[9px] top-[7px] flex items-center">
          <span className="relative mr-1 flex"><Icon name="head" className="size-5" /><Tri dir="d" className="absolute -bottom-1.5 -right-1.5" /></span>
          <button className={`ml-1.5 flex h-[23px] w-[151px] items-center pl-1 text-left ${raised}`}>
            <Icon name="window" className="mr-1.5 size-3.5" />
            <span className="flex-1">Perspective View</span>
            <Tri dir="d" className="mr-3" />
          </button>
          <Icon name="paneMenu" className="ml-2 size-4" />
        </div>
        <div className="absolute right-[7px] top-[34px] flex flex-col gap-[6px]">
          {["orbit", "pan", "zoom", "frame", "home"].map((n) => (
            <button key={n} aria-label={n} className="flex size-[21px] items-center justify-center"><Icon name={n} className="size-5" /></button>
          ))}
        </div>
      </div>
    </main>
  );
}

function ProductList({ rows }: { rows: string[] }) {
  return (
    <ul className="text-[#dadae2]">
      {rows.map((r, i) => (
        <li key={r} className={`flex h-5 items-center border-b border-[#4a4a50] pl-1 ${i < 2 ? "bg-[#111113]" : ""}`}>
          <Tri dir="r" className={`mr-0.5 ${i === 0 ? "invisible" : ""}`} />{r}
        </li>
      ))}
    </ul>
  );
}

function HelpLine({ className, children }: { className: string; children: ReactNode }) {
  return <p className={`whitespace-nowrap text-right text-xs leading-[15px] ${className}`}>{children}</p>;
}

function SmartContent() {
  return (
    <section className="flex h-[493px] shrink-0 flex-col border-t-[5px] border-[#434349] bg-[#39393d]">
      <div className="mb-px mt-[3px] flex h-[21px] items-center bg-gradient-to-b from-[#48484d] to-[#29292c] pl-0.5">
        <button className="h-5 w-[47px] border-r border-[#222225] text-[#8e8e98]">Files</button>
        <button className="h-5 w-[70px] bg-gradient-to-b from-[#505056] to-[#36363a] text-[#d4d4dc]">Products</button>
        <button className="ml-auto h-[19px] w-[62px] bg-gradient-to-b from-[#10ffc4] to-[#00d8a0] text-[#06281e]">Login...</button>
      </div>
      <div className="flex flex-1 border-b border-[#1f1f22]">
        <div className="flex w-[132px] flex-col border border-[#1c1c1f] bg-[#28282c]">
          <button className={`mx-1 my-[2px] flex h-[23px] w-[110px] items-center pl-1 text-left italic text-[#242428] ${raised}`}>
            <Icon name="funnel" className="mr-1 size-4" /><span className="flex-1">No Selection</span><Tri dir="d" className="mr-px text-[#dcdce4]" />
          </button>
          <ProductList rows={["All Products", "Default", "Props", "User"]} />
          <label className="mt-auto flex h-[22px] items-center gap-1 pl-1.5 text-[#d0d0d8]">
            <span className="relative flex size-3.5">
              <input type="checkbox" defaultChecked className="peer size-3.5 appearance-none border border-[#26262a] bg-[#55555c]" />
              <svg viewBox="0 0 14 14" className="pointer-events-none absolute inset-0 size-3.5"><path d="M1 8l4 4 8-10" fill="none" stroke="#0ff0b0" strokeWidth="3" /></svg>
            </span>
            Filter By Context
          </label>
        </div>
        <div className="flex flex-1 flex-col">
          <div className="flex h-[27px] items-center bg-[#29292d] pr-1.5">
            <input aria-label="Filter products" className="h-[23px] min-w-0 flex-1 bg-[#60606c]" />
            <span className="w-[27px] text-right">0 - 0</span>
          </div>
          <button aria-label="Sort order" className={`mt-[3px] flex h-5 items-center justify-end pr-2 ${raised}`}><Tri dir="d" /></button>
          <div className="flex flex-1 flex-col">
            <h2 className="mt-[28px] w-[231px] text-right text-sm leading-[18px]">Where Are My Products?</h2>
            <hr className="mb-[22px] mr-[42px] mt-[8px] border-[#6a6a70]" />
            <HelpLine className="w-[220px]">Make a selection from the left.</HelpLine>
            <HelpLine className="mt-[13px] w-[248px]">Click a product to explore it.</HelpLine>
            <HelpLine className="mt-[27px] w-[277px]">You may need to clear your keyword</HelpLine>
            <HelpLine className="w-[150px]">to see results.</HelpLine>
            <hr className="mr-[42px] mt-[42px] border-[#6a6a70]" />
            <button className={`mr-5 mt-[35px] h-[21px] pl-[105px] text-left ${raised}`}><span className="block w-[89px] text-right">Video: Files</span></button>
            <button className={`mr-5 mt-[10px] h-[21px] pl-[105px] text-left ${raised}`}><span className="block w-[99px] text-right">Video: Products</span></button>
            <div className="mb-0.5 mt-auto flex h-[21px] items-center justify-end border-t border-[#232326] bg-[#2f2f33] pr-1 text-[#85858f]">
              <button className="h-5 w-[66px] border-r border-[#232326] pr-3 text-right">Available</button>
              <button className="h-5 w-[66px] border-r border-[#232326]">Updates</button>
              <button className="h-5 w-[66px]">Pending</button>
            </div>
          </div>
        </div>
      </div>
    </section>
  );
}

function InstallPane() {
  return (
    <section className="flex flex-1 flex-col border-b-8 border-t-[5px] border-[#434349] bg-[#39393d] pt-1">
      <div className="flex flex-1">
        <div className="w-[132px] border border-[#1c1c1f] bg-[#28282c]">
          <ProductList rows={["All Products", "Default", "User"]} />
        </div>
        <div className="flex flex-1 flex-col">
          <div className="flex h-[29px] items-center bg-[#29292d] pr-1.5">
            <input aria-label="Filter installs" placeholder="Enter text to filter installs by..." className="h-[23px] min-w-0 flex-1 bg-[#60606c] pl-0.5 placeholder:text-[#8b8b96]" />
            <span className="w-[27px] text-right">0 - 0</span>
          </div>
          <button className={`mt-px flex h-[23px] items-center justify-between pl-[114px] pr-2 ${raised}`}><span>Newest First</span><Tri dir="d" /></button>
          <div className="flex flex-1 flex-col">
            <h2 className="mt-[52px] w-[240px] text-right text-sm leading-[18px]">Where Are My Products?</h2>
            <hr className="mb-[22px] mr-[40px] mt-[8px] border-[#6a6a70]" />
            <HelpLine className="w-[238px]">Make a selection from the left.</HelpLine>
            <HelpLine className="mt-[13px] w-[259px]">Click a product to install it.</HelpLine>
            <HelpLine className="mt-[19px] w-[270px]">You may need to clear the Filter</HelpLine>
            <HelpLine className="w-[215px]">by text to see results.</HelpLine>
            <hr className="mr-[40px] mt-[35px] border-[#6a6a70]" />
            <button className={`mr-5 mt-[35px] h-[21px] ${raised}`}><span className="block w-[206px] text-right">Video: Install</span></button>
            <div className="mb-0.5 mt-auto flex h-[21px] items-center justify-end border-t border-[#232326] bg-[#2c2c30] pr-0.5">
              <button className="h-[19px] w-[116px] bg-gradient-to-b from-[#2affc8] to-[#00d8a0] italic text-[#06281e]">Install Selected</button>
            </div>
          </div>
        </div>
      </div>
    </section>
  );
}

function BottomBar() {
  return (
    <footer className="flex h-[55px] shrink-0 justify-between bg-[#1e1e20]">
      <div className="flex items-start gap-[5px] pl-[5px] pt-[11px] text-xs">
        <button className="h-[19px] bg-[#39393d] px-4 text-[#d4d4dc] [clip-path:polygon(9px_0,calc(100%-9px)_0,100%_100%,0_100%)]">aniMate2</button>
        <button className="h-[19px] bg-[#2a2a2d] px-[17px] text-[#8e8e98] [clip-path:polygon(9px_0,calc(100%-9px)_0,100%_100%,0_100%)]">Timeline</button>
      </div>
      <div className="flex flex-col items-end justify-between pb-[3px] pt-[10px]">
        <Icon name="paneMenu" className="size-4" />
        <div className="flex pr-0.5">
          <button className={`mr-2 h-[21px] w-[110px] pl-1.5 text-left text-[#d4d4dc] ${raised}`}>Select a Lesson...</button>
          <div className="ml-[103px] flex">
            {[1, 2, 3, 4, 5, 6, 7, 8, 9].map((n) => (
              <button key={n} className={`h-[21px] w-[21px] italic text-[#26262a] ${raised}`}>{n}</button>
            ))}
          </div>
        </div>
      </div>
    </footer>
  );
}

const panes: [string, string][] = [
  ["Align", "align"], ["aniMate2", "animate"], ["aniMate2 Constraints", "animate"], ["AutoSave", "autosave"],
  ["Aux Viewport", "aux"], ["Batch Convert", "batch"], ["Cameras", "cameras"], ["Content Library", "book"],
  ["DForm", "dform"], ["Draw Settings", "ballSettings"], ["Dynamic Clothing", "clothing"],
  ["Environment", "environment"], ["Face Transfer", "face"], ["Figure Setup", "figureSetup"], ["Fisio", "fisio"],
  ["FisioSB", "fisiosb"], ["Foliage Maker", "foliage"], ["Gescon II", "gescon"], ["Help", "help"],
  ["Histogram", ""], ["Lights", "lights"], ["Measure Metrics", "measure"], ["Parameters", "parameters"],
  ["Posing", "posing"], ["PowerPose", "powerpose"], ["Property Hierarchy", "hierarchy"], ["Proteus", "proteus"],
  ["Puppeteer", "puppeteer"], ["Render Album", "album"], ["Render Library", "library"],
  ["Render Settings", "camSettings"], ["RSL Editor", "rsl"], ["Scene", "scene"], ["Script IDE", "script"],
  ["Shader Builder", "builder"], ["Shader Mixer", "mixer"], ["Shaping", "shaping"],
  ["Simulation Settings", "simulation"], ["Smart Content", "smart"], ["Steps", "steps"], ["Surfaces", "diamonds"],
  ["Thickener", "thickener"], ["Timeline", "timeline"], ["Tool Settings", "arrowSettings"],
  ["UI Widget Map", "widget"], ["UltraScatter2", "scatter"], ["UltraScenery2", "scenery"],
  ["UltraSceneryXT", "mountain"], ["View", "view"], ["Viewport", "window"],
];

function PaneMenu() {
  return (
    <ul role="menu" className="absolute right-[170px] top-0 w-[154px] border-r-2 border-[#28282b] bg-[#38383c] pb-px pl-[3px] pt-[3px] shadow-lg">
      {panes.map(([label, icon]) => (
        <li key={label} role="none">
          <button
            role="menuitem"
            className={`flex w-full items-center pl-0.5 text-left ${icon ? "h-6" : "h-5"} ${label === "Scene" ? "bg-[#00ffc0] text-[#06281e]" : ""}`}
          >
            {icon ? <Icon name={icon} className="mr-[7px] size-5" /> : <span className="mr-[7px] w-5" />}
            {label}
          </button>
        </li>
      ))}
    </ul>
  );
}

function GroupMenu() {
  return (
    <ul role="menu" className="absolute right-[324px] top-[747px] w-[131px] bg-[#38383c] pt-0.5 shadow-md">
      <li role="none" className="pl-0.5">
        <button role="menuitem" className="flex h-5 w-full items-center justify-between bg-[#00ffc0] pl-[17px] text-[#06281e]">Add Pane To Group<Tri dir="r" /></button>
      </li>
      <li role="none" className="mt-px border-t border-[#4a4a50]">
        <button role="menuitem" className="block h-[21px] w-full pl-[19px] text-left">Undock Pane Group</button>
      </li>
    </ul>
  );
}

const inkStrokes = [
  "M104 597V480",
  "M80 505Q86 458 116 452Q142 455 128 492L112 505Q145 570 180 583L200 575",
  "M222 455L211 478",
  "M213 505Q210 560 228 590",
  "M298 467Q250 500 246 550Q262 568 285 548Q304 520 310 488Q325 620 316 680Q302 738 264 738Q200 722 193 650Q190 610 202 582",
  "M300 470L305 530L265 550",
  "M342 335Q342 420 370 540Q380 500 386 450Q400 460 410 518Q430 460 437 410Q448 450 466 500Q486 480 478 440",
  "M437 435L450 480L462 455L480 462Q500 430 533 412",
  "M605 402Q625 410 642 393",
  "M768 328Q730 328 721 362Q730 392 770 362",
  "M786 182Q786 300 820 376Q845 340 850 298Q862 330 875 342Q895 325 905 280L928 328",
  "M914 240V245",
  "M985 250Q955 265 962 300Q975 335 1000 305",
  "M978 83L1000 180L1020 305Q1035 200 1062 178Q1086 182 1086 212Q1080 232 1050 240Q1078 272 1103 262",
  "M553 470Q610 426 740 424H970Q1080 424 1150 448L1222 475",
  "M1190 408L1190 462L1222 475Q1150 490 1155 548",
  "M433 595Q408 605 420 680Q430 790 453 895",
  "M445 735Q485 765 505 845",
  "M505 800Q565 770 572 720Q570 690 548 710Q520 750 528 795Q545 835 582 812Q615 780 628 720",
  "M625 690L632 795Q630 720 668 668",
  "M700 705Q730 670 718 630Q695 625 692 690Q694 760 722 765Q770 745 778 660",
  "M452 1085Q395 1095 406 1130Q462 1145 458 1185Q450 1215 420 1240",
  "M508 1170Q552 1150 540 1100Q518 1105 530 1145",
  "M598 995Q565 990 574 1060Q584 1140 605 1150Q630 1120 640 1070Q632 1120 655 1125Q680 1125 690 1075",
  "M745 1030Q715 1045 722 1083Q745 1095 785 1040",
  "M780 995L798 1062L812 1030",
  "M785 1005L812 1012Q835 1000 855 975",
  "M632 1225L625 1280L655 1357",
  "M628 1280Q675 1240 668 1205Q645 1195 632 1225",
  "M740 1165Q700 1190 712 1245Q735 1258 765 1170L775 1220L795 1140L815 1190L832 1110L858 1180",
  "M890 1112Q932 1090 920 1058Q895 1052 886 1100Q886 1142 925 1137L962 1088L965 1125",
];

function Ink() {
  return (
    <svg viewBox="0 0 1920 1200" aria-hidden="true" className="pointer-events-none absolute inset-0 h-full w-full" fill="none" stroke="#000" strokeLinecap="round" strokeLinejoin="round">
      <g transform="translate(1060 590) scale(.33333)" strokeWidth="29">
        {inkStrokes.map((d) => <path key={d} d={d} />)}
      </g>
      <path strokeWidth="11" d="M1382 964L1478 896Q1500 880 1530 866L1606 823L1682 779M1653 773Q1656 785 1668 783L1682 779M1668 787Q1652 808 1658 815L1664 817" />
    </svg>
  );
}

export default function App() {
  return (
    <div className="relative flex min-h-screen flex-col overflow-hidden bg-[#1e1e20] font-['Liberation_Sans',Arial,sans-serif] text-[11px] text-[#c6c6d2]">
      <TitleBar />
      <MenuBar />
      <Toolbar />
      <div className="flex flex-1">
        <div className="w-2 bg-[#39393d]" />
        <ContentLibrary />
        <div className="flex w-8 shrink-0 flex-col gap-0.5 pl-0.5">
          <div className="flex h-[19px] pl-0.5 pt-0.5"><Icon name="paneMenu" className="size-3.5" /></div>
          <SideTab label="Content Library" side="l" active />
          <SideTab label="Draw Settings" side="l" />
          <SideTab label="Render Settings" side="l" />
          <SideTab label="Simulation Settings" side="l" />
        </div>
        <Viewport />
        <div className="flex w-[30px] shrink-0 flex-col items-end border-l border-[#151517] pr-0.5">
          <div className="flex h-[509px] flex-col gap-px">
            <div className="h-6 pt-1.5"><Icon name="paneMenu" className="size-4" /></div>
            <SideTab label="Parameters" side="r" />
            <SideTab label="Surfaces" side="r" />
            <SideTab label="Smart Content" side="r" active />
          </div>
          <div className="flex h-[19px] w-[19px]"><Icon name="paneMenu" className="size-4" /></div>
          <SideTab label="Install" side="r" active />
        </div>
        <div className="flex w-[440px] shrink-0 flex-col">
          <SmartContent />
          <div className="h-[9px] bg-[#343438]" />
          <InstallPane />
        </div>
      </div>
      <BottomBar />
      <PaneMenu />
      <GroupMenu />
      <Ink />
    </div>
  );
}
